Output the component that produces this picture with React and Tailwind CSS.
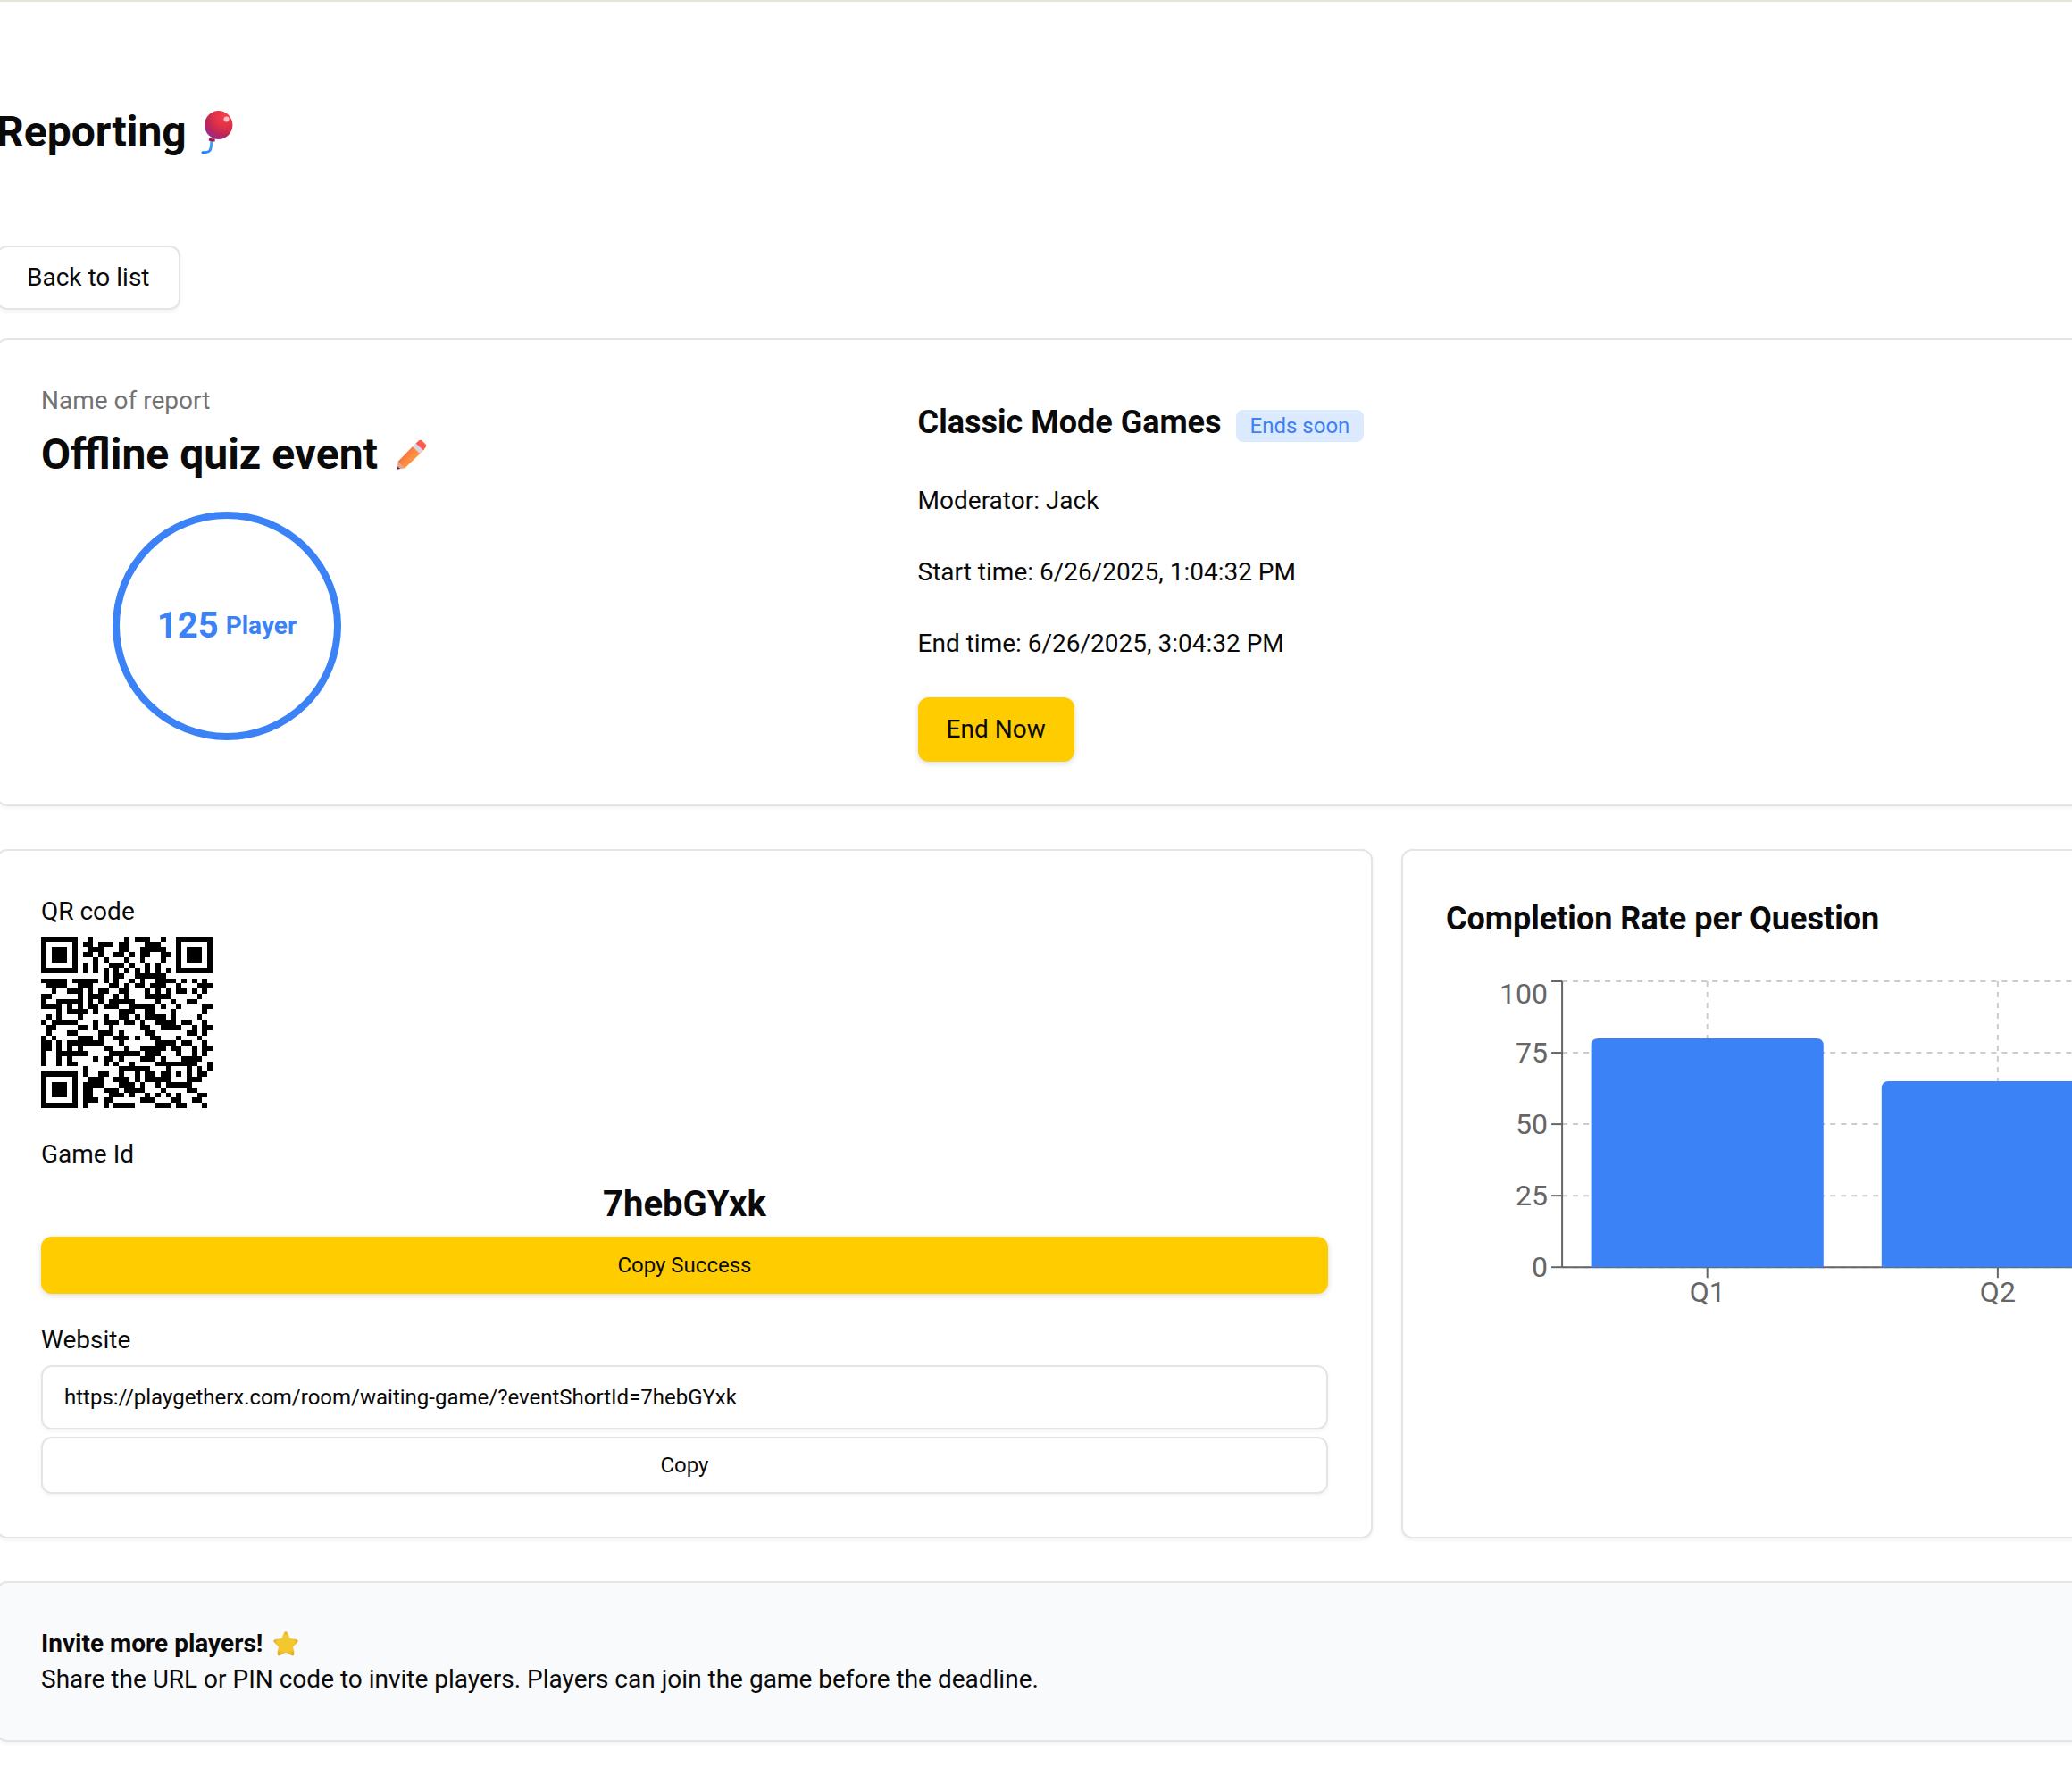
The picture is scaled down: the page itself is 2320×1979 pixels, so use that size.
import { useMemo } from "react";

const INVITE_URL = "https://playgetherx.com/room/waiting-game/?eventShortId=7hebGYxk";

/* ---------- QR code (version 4, level L, byte mode, mask 2) ---------- */

const QR_SIZE = 33;
const QR_DATA = 80;
const QR_ECC = 20;
const QR_FORMAT = "111110110101010";

function gfMultiply(a, b) {
  let z = 0;
  for (let i = 7; i >= 0; i--) {
    z = (z << 1) ^ ((z >>> 7) * 0x11d);
    z ^= ((b >>> i) & 1) * a;
  }
  return z;
}

function eccCodewords(data, degree) {
  const divisor = new Array(degree).fill(0);
  divisor[degree - 1] = 1;
  let root = 1;
  for (let i = 0; i < degree; i++) {
    for (let j = 0; j < degree; j++) {
      divisor[j] = gfMultiply(divisor[j], root);
      if (j + 1 < degree) divisor[j] ^= divisor[j + 1];
    }
    root = gfMultiply(root, 2);
  }
  const rest = new Array(degree).fill(0);
  for (const byte of data) {
    const factor = byte ^ rest.shift();
    rest.push(0);
    divisor.forEach((c, i) => {
      rest[i] ^= gfMultiply(c, factor);
    });
  }
  return rest;
}

function buildQr(text) {
  const bits = [];
  const put = (value, length) => {
    for (let i = length - 1; i >= 0; i--) bits.push((value >>> i) & 1);
  };
  put(4, 4);
  put(text.length, 8);
  for (const ch of text) put(ch.charCodeAt(0), 8);
  put(0, 4);
  while (bits.length % 8) bits.push(0);
  for (let pad = 0xec; bits.length < QR_DATA * 8; pad ^= 0xec ^ 0x11) put(pad, 8);

  const data = [];
  for (let i = 0; i < bits.length; i += 8) data.push(parseInt(bits.slice(i, i + 8).join(""), 2));
  const all = [...data, ...eccCodewords(data, QR_ECC)];

  const grid = Array.from({ length: QR_SIZE }, () => new Array(QR_SIZE).fill(null));
  const set = (row, col, on) => {
    if (row >= 0 && col >= 0 && row < QR_SIZE && col < QR_SIZE) grid[row][col] = on ? 1 : 0;
  };

  for (let i = 0; i < QR_SIZE; i++) {
    set(6, i, i % 2 === 0);
    set(i, 6, i % 2 === 0);
  }
  for (const [r, c] of [[3, 3], [3, QR_SIZE - 4], [QR_SIZE - 4, 3]]) {
    for (let dy = -4; dy <= 4; dy++) {
      for (let dx = -4; dx <= 4; dx++) {
        const d = Math.max(Math.abs(dx), Math.abs(dy));
        set(r + dy, c + dx, d !== 2 && d !== 4);
      }
    }
  }
  for (let dy = -2; dy <= 2; dy++) {
    for (let dx = -2; dx <= 2; dx++) set(26 + dy, 26 + dx, Math.max(Math.abs(dx), Math.abs(dy)) !== 1);
  }

  const f = (i) => QR_FORMAT[14 - i] === "1";
  for (let i = 0; i <= 5; i++) set(i, 8, f(i));
  set(7, 8, f(6));
  set(8, 8, f(7));
  set(8, 7, f(8));
  for (let i = 9; i < 15; i++) set(8, 14 - i, f(i));
  for (let i = 0; i < 8; i++) set(8, QR_SIZE - 1 - i, f(i));
  for (let i = 8; i < 15; i++) set(QR_SIZE - 15 + i, 8, f(i));
  set(QR_SIZE - 8, 8, true);

  let k = 0;
  for (let right = QR_SIZE - 1; right >= 1; right -= 2) {
    if (right === 6) right = 5;
    for (let vert = 0; vert < QR_SIZE; vert++) {
      for (let j = 0; j < 2; j++) {
        const col = right - j;
        const row = ((right + 1) & 2) === 0 ? QR_SIZE - 1 - vert : vert;
        if (grid[row][col] === null) {
          const bit = k < all.length * 8 ? (all[k >>> 3] >>> (7 - (k & 7))) & 1 : 0;
          k++;
          grid[row][col] = bit ^ (col % 3 === 0 ? 1 : 0);
        }
      }
    }
  }
  return grid;
}

function QrCode({ value }) {
  const path = useMemo(
    () =>
      buildQr(value)
        .flatMap((row, y) => row.map((on, x) => (on ? `M${x} ${y}h1v1h-1z` : "")))
        .join(""),
    [value]
  );
  return (
    <svg viewBox="0 0 33 33" className="mt-2 size-48" shapeRendering="crispEdges" role="img" aria-label="QR code">
      <path d={path} fill="#000" />
    </svg>
  );
}

/* ---------- Icons ---------- */

function Balloon() {
  return (
    <svg viewBox="0 0 36 48" className="h-12 w-9" aria-hidden="true">
      <defs>
        <radialGradient id="balloon" cx="0.72" cy="0.2" r="0.9">
          <stop offset="0" stopColor="#f8404e" />
          <stop offset="0.45" stopColor="#dc3048" />
          <stop offset="0.75" stopColor="#b8265a" />
          <stop offset="1" stopColor="#8f2f9c" />
        </radialGradient>
        <linearGradient id="string" x1="0" y1="1" x2="1" y2="0">
          <stop offset="0" stopColor="#1a7dff" />
          <stop offset="1" stopColor="#4aa5ff" />
        </linearGradient>
      </defs>
      <path d="M12 33c-.5 4 0 8-2 11.500-1.500 2.200-4.500 2.200-8 2.200" fill="none" stroke="url(#string)" strokeWidth="3" strokeLinecap="round" />
      <path d="M9.500 30.500c2 .8 4 1 6 .8l.3 3c-2.500.6-5 .2-7.300-1z" fill="#a3143f" />
      <ellipse cx="19.700" cy="16" rx="15.700" ry="16" fill="url(#balloon)" />
      <ellipse cx="28.500" cy="9.500" rx="3" ry="3" fill="#ffd9dc" opacity="0.85" />
    </svg>
  );
}

function Pencil() {
  return (
    <svg viewBox="0 0 36 36" className="size-9" aria-hidden="true">
      <defs>
        <linearGradient id="pencil" x1="0.2" y1="0.3" x2="0.8" y2="0.8">
          <stop offset="0" stopColor="#f26b4a" />
          <stop offset="0.5" stopColor="#ff8c3c" />
          <stop offset="1" stopColor="#ff9d4d" />
        </linearGradient>
      </defs>
      <path d="M19 9 27.500 17 10 33.500 2.500 26z" fill="url(#pencil)" />
      <path d="M2.500 26 10 33.500 2 34.500z" fill="#e0a48f" />
      <path d="M2.200 31.500 5 34.100 2 34.500z" fill="#4b2146" />
      <path d="M19 9 22.500 5.500 31 13.500 27.500 17z" fill="#d9d3e6" />
      <path d="M22.500 5.500 26 2.500q1.700-1.400 3.500 0l4 4q1.600 1.800 0 3.500L31 13.500z" fill="#fd5a50" />
    </svg>
  );
}

function Star() {
  return (
    <svg viewBox="0 0 28 28" className="size-7" aria-hidden="true">
      <defs>
        <radialGradient id="star" cx="0.5" cy="0.5" r="0.55">
          <stop offset="0" stopColor="#f0c634" />
          <stop offset="0.6" stopColor="#f4c92e" />
          <stop offset="1" stopColor="#dda431" />
        </radialGradient>
      </defs>
      <path
        d="M12.200 1.600q1.800-2.600 3.600 0l3 6.400 7 .9q3 .8 1.300 3.300l-5 5.200 1.400 7.600q0 3-2.800 2.200L14 23.800 7.300 27.200q-2.800.8-2.800-2.200l1.400-7.600-5-5.200q-1.700-2.500 1.300-3.300l7-.9z"
        fill="url(#star)"
      />
    </svg>
  );
}

/* ---------- Chart ---------- */

const RATES = [
  { name: "Q1", value: 80 },
  { name: "Q2", value: 65 },
];
const TICKS = [0, 25, 50, 75, 100];
const PLOT = { x: 130, y: 10, width: 1300, height: 320, slot: 325, bar: 260 };

function CompletionChart() {
  const base = PLOT.y + PLOT.height;
  const toY = (v) => base - (v / 100) * PLOT.height;
  const center = (i) => PLOT.x + PLOT.slot * (i + 0.5);
  return (
    <svg viewBox="0 0 1440 400" className="mt-8 w-full text-[32px]" role="img" aria-label="Completion rate per question">
      <g stroke="#ccc" strokeWidth="2" strokeDasharray="6 6">
        {TICKS.map((t) => (
          <line key={t} x1={PLOT.x} x2={PLOT.x + PLOT.width} y1={toY(t)} y2={toY(t)} />
        ))}
        {RATES.map((r, i) => (
          <line key={r.name} x1={center(i)} x2={center(i)} y1={PLOT.y} y2={base} />
        ))}
      </g>
      <g stroke="#666" strokeWidth="2">
        <line x1={PLOT.x} x2={PLOT.x + PLOT.width} y1={base} y2={base} />
        <line x1={PLOT.x} x2={PLOT.x} y1={PLOT.y} y2={base} />
        {TICKS.map((t) => (
          <line key={t} x1={PLOT.x - 12} x2={PLOT.x} y1={toY(t)} y2={toY(t)} />
        ))}
        {RATES.map((r, i) => (
          <line key={r.name} x1={center(i)} x2={center(i)} y1={base} y2={base + 12} />
        ))}
      </g>
      {RATES.map((r, i) => {
        const left = center(i) - PLOT.bar / 2;
        const top = toY(r.value);
        return (
          <path
            key={r.name}
            d={`M${left} ${base}V${top + 8}q0-8 8-8h${PLOT.bar - 16}q8 0 8 8V${base}z`}
            fill="#3b82f6"
          />
        );
      })}
      <g fill="#666" textAnchor="end">
        {TICKS.map((t) => (
          <text key={t} x={PLOT.x - 16} y={t === 100 ? 35 : toY(t) + 11}>
            {t}
          </text>
        ))}
      </g>
      <g fill="#666" textAnchor="middle">
        {RATES.map((r, i) => (
          <text key={r.name} x={center(i)} y={base + 39}>
            {r.name}
          </text>
        ))}
      </g>
    </svg>
  );
}

/* ---------- Page ---------- */

function Card({ className = "", children }) {
  return (
    <section className={`rounded-xl border-2 border-neutral-200 p-12 shadow-[0_2px_4px_rgba(0,0,0,0.05)] ${className}`}>
      {children}
    </section>
  );
}

export default function App() {
  return (
    <div className="overflow-x-hidden bg-white pb-7 font-['Roboto',sans-serif] text-[28px] leading-10 text-neutral-950">
      <header className="h-0.5 bg-[#e1e7d9]" />
      <main className="-ml-1 w-[calc(134%+5px)]">
        <h1 className="flex items-center gap-4 pt-[114px] text-5xl leading-16 font-bold">
          Reporting <Balloon />
        </h1>

        <button
          type="button"
          className="mt-[95px] block h-18 rounded-xl border-2 border-neutral-200 bg-white px-8 shadow-[0_2px_4px_rgba(0,0,0,0.05)]"
        >
          Back to list
        </button>

        <Card className="mt-8 grid grid-cols-[981fr_2031fr] bg-white">
          <div>
            <p className="text-neutral-500">Name of report</p>
            <h2 className="mt-2 flex items-center gap-5 text-5xl leading-16 font-bold">
              Offline quiz event
              <button type="button" aria-label="Edit name">
                <Pencil />
              </button>
            </h2>
            <div className="mt-8 mb-6 ml-20 flex size-64 items-center justify-center gap-2 rounded-full border-8 border-[#3b82f6] font-bold text-[#3b82f6]">
              <span className="text-[40px]">125</span>
              <span>Player</span>
            </div>
          </div>
          <div className="flex flex-col items-start gap-10 pt-4">
            <h2 className="text-4xl leading-14 font-bold">
              Classic Mode Games
              <span className="ml-4 rounded-lg bg-[#dbeafe] px-4 py-1 text-2xl font-normal text-[#3b82f6]">Ends soon</span>
            </h2>
            <p>Moderator: Jack</p>
            <p>Start time: 6/26/2025, 1:04:32 PM</p>
            <p>End time: 6/26/2025, 3:04:32 PM</p>
            <button type="button" className="h-18 rounded-xl bg-[#ffcc00] px-8 shadow-[0_2px_6px_rgba(0,0,0,0.15)]">
              End Now
            </button>
          </div>
        </Card>

        <div className="mt-12 grid grid-cols-2 gap-8">
          <Card className="bg-white">
            <p>QR code</p>
            <QrCode value={INVITE_URL} />
            <p className="mt-8">Game Id</p>
            <p className="mt-2 text-center text-[40px] leading-14 font-bold">7hebGYxk</p>
            <button
              type="button"
              className="mt-2 block h-16 w-full rounded-xl bg-[#ffcc00] text-2xl shadow-[0_2px_6px_rgba(0,0,0,0.15)]"
            >
              Copy Success
            </button>
            <label htmlFor="website" className="mt-8 block">
              Website
            </label>
            <input
              id="website"
              readOnly
              value={INVITE_URL}
              className="mt-2 block h-18 w-full rounded-xl border-2 border-neutral-200 px-6 text-2xl shadow-[0_2px_4px_rgba(0,0,0,0.05)] outline-none"
            />
            <button
              type="button"
              className="mt-2 block h-16 w-full rounded-xl border-2 border-neutral-200 bg-white text-2xl shadow-[0_2px_4px_rgba(0,0,0,0.05)]"
            >
              Copy
            </button>
          </Card>

          <Card className="bg-white">
            <h2 className="text-4xl leading-14 font-bold">Completion Rate per Question</h2>
            <CompletionChart />
          </Card>
        </div>

        <Card className="mt-12 bg-[#f9fafc]">
          <h3 className="flex items-center gap-3 font-bold">
            Invite more players! <Star />
          </h3>
          <p>Share the URL or PIN code to invite players. Players can join the game before the deadline.</p>
        </Card>
      </main>
    </div>
  );
}
